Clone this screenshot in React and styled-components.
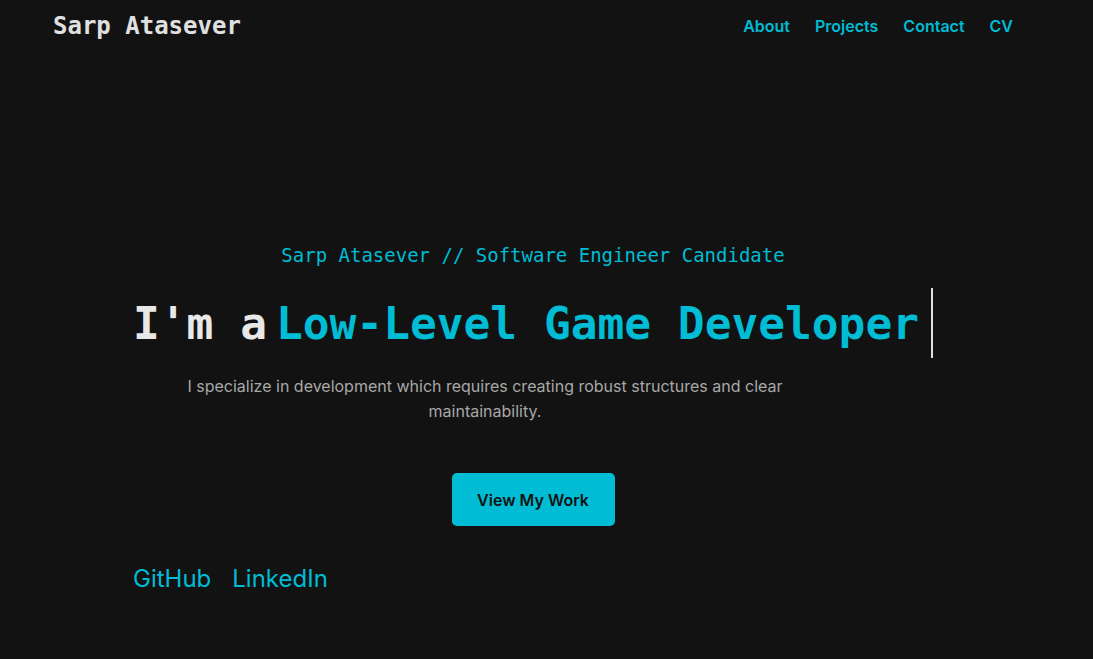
import React from "react";
import styled, { createGlobalStyle } from "styled-components";

const GlobalStyle = createGlobalStyle`
  html, body {
    margin: 0;
    padding: 0;
    background: #121212;
  }
  body {
    font-family: Inter, "Noto Sans", sans-serif;
    color: #e0e0e0;
  }
`;

const mono = `"DejaVu Sans Mono", "Liberation Mono", monospace`;

export const Page = styled.div`
  width: 1066px;
  min-height: 659px;
  background: #121212;
`;

export const Header = styled.header`
  max-width: 960px;
  height: 52px;
  margin: 0 auto;
  display: flex;
  align-items: center;
  justify-content: space-between;
`;

export const Logo = styled.div`
  font-family: ${mono};
  font-weight: 700;
  font-size: 24px;
  color: #e0e0e0;
`;

export const Nav = styled.nav`
  display: flex;
  gap: 25px;
`;

export const NavLink = styled.a`
  font-size: 16px;
  font-weight: 600;
  color: #00bcd4;
  text-decoration: none;
  cursor: pointer;
`;

export const Hero = styled.section`
  max-width: 800px;
  margin: 189px auto 0;
  text-align: center;
`;

export const Tagline = styled.p`
  margin: 0;
  font-family: ${mono};
  font-size: 19px;
  line-height: 29px;
  color: #00bcd4;
`;

export const Headline = styled.h1`
  margin: 18px 0 0;
  height: 70px;
  display: flex;
  align-items: center;
  justify-content: center;
  font-family: ${mono};
  font-weight: 700;
  font-size: 44.5px;
  color: #e8e8e8;
  white-space: pre;
`;

export const Role = styled.span`
  color: #00bcd4;
  margin-left: 9px;
`;

export const Caret = styled.span`
  width: 3px;
  height: 70px;
  margin-left: 12px;
  background: #e0e0e0;
`;

export const Blurb = styled.p`
  max-width: 704px;
  margin: 16px 0 0;
  font-size: 16px;
  line-height: 25px;
  color: #a8a8a8;
`;

export const Button = styled.button`
  margin-top: 49px;
  width: 163px;
  height: 53px;
  border: none;
  border-radius: 5px;
  background: #00bcd4;
  color: #121212;
  font-family: Inter, "Noto Sans", sans-serif;
  font-size: 16px;
  font-weight: 600;
  cursor: pointer;
`;

export const Socials = styled.div`
  margin-top: 38px;
  display: flex;
  gap: 21px;
`;

export const SocialLink = styled.a`
  font-size: 24px;
  line-height: 30px;
  color: #00bcd4;
  text-decoration: none;
  cursor: pointer;
`;

const App = () => {
  return (
    <Page>
      <GlobalStyle />
      <Header>
        <Logo>Sarp Atasever</Logo>
        <Nav>
          <NavLink>About</NavLink>
          <NavLink>Projects</NavLink>
          <NavLink>Contact</NavLink>
          <NavLink>CV</NavLink>
        </Nav>
      </Header>
      <Hero>
        <Tagline>Sarp Atasever // Software Engineer Candidate</Tagline>
        <Headline>
          I'm a<Role>Low-Level Game Developer</Role>
          <Caret />
        </Headline>
        <Blurb>
          I specialize in development which requires creating robust structures
          and clear maintainability.
        </Blurb>
        <Button>View My Work</Button>
        <Socials>
          <SocialLink>GitHub</SocialLink>
          <SocialLink>LinkedIn</SocialLink>
        </Socials>
      </Hero>
    </Page>
  );
};

export default App;
